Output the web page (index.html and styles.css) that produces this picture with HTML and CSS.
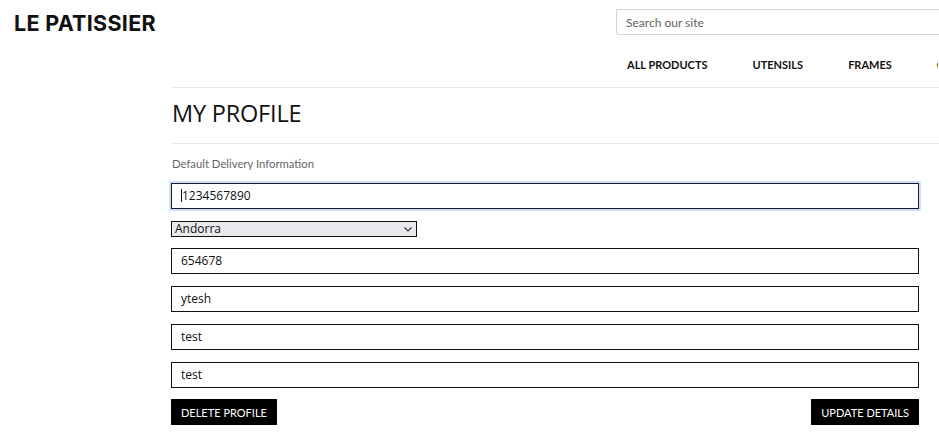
FILE: index.html
```html
<!DOCTYPE html>
<html>
<head>
<meta charset="utf-8">
<link rel="stylesheet" href="styles.css">
</head>
<body>
<header class="top">
  <div class="logo">LE PATISSIER</div>
  <div class="search">Search our site</div>
</header>
<div class="main">
  <nav class="nav">
    <span>ALL PRODUCTS</span>
    <span>UTENSILS</span>
    <span>FRAMES</span>
    <span>CAKES</span>
  </nav>
  <div class="rule"></div>
  <h1 class="title">MY PROFILE</h1>
  <div class="rule"></div>
  <p class="label">Default Delivery Information</p>
  <form class="form">
    <div class="field focus"><span class="caret"></span>1234567890</div>
    <div class="select"><span>Andorra</span>
      <svg width="8" height="5" viewBox="0 0 8 5"><path d="M0.5 0.5 L4 4 L7.5 0.5" fill="none" stroke="#333" stroke-width="1.1"/></svg>
    </div>
    <div class="field">654678</div>
    <div class="field">ytesh</div>
    <div class="field">test</div>
    <div class="field">test</div>
    <div class="actions">
      <button type="button" class="btn">DELETE PROFILE</button>
      <button type="button" class="btn">UPDATE DETAILS</button>
    </div>
  </form>
</div>
</body>
</html>
```
FILE: styles.css
```css
html, body { margin: 0; padding: 0; background: #fff; overflow: hidden; }
body { font-family: Lato, "Open Sans", sans-serif; color: #111; width: 939px; height: 448px; position: relative; }
.top { display: flex; justify-content: space-between; align-items: flex-start; height: 45px; }
.logo { font-family: Inter, Lato, sans-serif; font-weight: 700; font-size: 21.5px; letter-spacing: 0.3px; margin: 10px 0 0 14px; color: #111; }
.search { margin-top: 9px; width: 326px; height: 24px; border: 1px solid #d4d4d4; border-right: none; border-radius: 3px 0 0 3px; font-size: 12px; color: #666; line-height: 25px; padding-left: 9px; box-sizing: content-box; margin-right: -13px; }
.main { margin-left: 172px; }
.nav { display: flex; gap: 45px; margin-left: 455px; height: 38px; padding-bottom: 4px; align-items: center; white-space: nowrap; font-size: 11px; font-weight: 700; color: #111; width: 311px; overflow: hidden; }
.rule { height: 1px; background: #e6e6e6; width: 800px; }
.title { font-family: "Open Sans", Lato, sans-serif; font-weight: 400; font-size: 23.5px; margin: 0; height: 55px; line-height: 50px; letter-spacing: -0.2px; color: #111; }
.label { font-size: 11.3px; color: #666; margin: 12px 0 12px; line-height: 15px; }
.form { display: flex; flex-direction: column; width: 748px; margin-left: -1px; }
.field { box-sizing: border-box; height: 26px; border: 1px solid #111; font-family: "Open Sans", sans-serif; font-size: 12px; line-height: 24px; padding-left: 9px; margin-bottom: 12px; color: #111; position: relative; }
.field.focus { box-shadow: 0 0 0 2px #cfe0f1; border-color: #1a1a2a; }
.caret { display: inline-block; width: 1px; height: 13px; background: #111; vertical-align: -2px; margin-right: 0; }
.select { box-sizing: border-box; width: 246px; height: 16px; border: 1px solid #111; background: #e9e9ed; font-family: "Open Sans", sans-serif; font-size: 12px; line-height: 14px; padding: 0 4px 0 3px; display: flex; justify-content: space-between; align-items: center; margin-bottom: 11px; }
.actions { display: flex; justify-content: space-between; margin-top: -1px; }
.btn { background: #000; color: #fff; border: none; font-family: Lato, sans-serif; font-size: 11px; height: 26px; padding: 0 10px; letter-spacing: 0; cursor: pointer; }
```
